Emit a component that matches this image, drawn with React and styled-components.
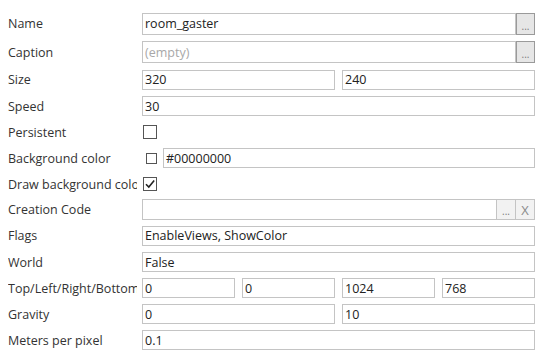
import React from "react";
import styled, { createGlobalStyle } from "styled-components";

const GlobalStyle = createGlobalStyle`
  html, body {
    margin: 0;
    padding: 0;
    background: #ffffff;
  }
  body {
    font-family: "Open Sans", "Noto Sans", "DejaVu Sans", sans-serif;
    font-size: 12.5px;
    color: #2b2b2b;
  }
`;

const Grid = styled.div`
  display: flex;
  flex-direction: column;
  width: 540px;
  padding: 9px 5px 0 8px;
  box-sizing: border-box;
`;

const Row = styled.div`
  display: flex;
  align-items: center;
  height: ${(p) => p.$h || 26}px;
`;

const Label = styled.div`
  width: 129px;
  margin-right: 5px;
  flex: none;
  white-space: nowrap;
  overflow: hidden;
  color: #333333;
  line-height: 17px;
`;

const Fields = styled.div`
  flex: 1;
  display: flex;
  align-items: center;
  gap: 7px;
  min-width: 0;
`;

const Box = styled.div`
  flex: 1;
  height: ${(p) => (p.$fill ? "auto" : "20px")};
  align-self: ${(p) => (p.$fill ? "stretch" : "auto")};
  box-sizing: border-box;
  border: 1px solid #c4c4c4;
  padding: 0 2px;
  display: flex;
  align-items: center;
  white-space: nowrap;
  overflow: hidden;
  color: ${(p) => (p.$muted ? "#a8a8a8" : "#222222")};
  min-width: 0;
`;

const Joined = styled.div`
  flex: 1;
  display: flex;
  align-items: stretch;
  height: ${(p) => p.$h || 22}px;
`;

const DotButton = styled.div`
  width: 19px;
  flex: none;
  box-sizing: border-box;
  border: 1px solid ${(p) => (p.$plain ? "#c4c4c4" : "#9a9a9a")};
  border-left: ${(p) => (p.$plain ? "none" : "1px solid #9a9a9a")};
  background: ${(p) => (p.$plain ? "#f2f2f2" : "#e6e6e6")};
  color: #7a7a7a;
  font-size: 10px;
  display: flex;
  align-items: flex-end;
  justify-content: center;
  padding-bottom: 3px;
  line-height: 10px;
`;

const XButton = styled.div`
  width: 19px;
  flex: none;
  box-sizing: border-box;
  border: 1px solid #c4c4c4;
  border-left: none;
  background: #f2f2f2;
  color: #8a8a8a;
  font-size: 13px;
  display: flex;
  align-items: center;
  justify-content: center;
`;

const Check = styled.div`
  width: ${(p) => p.$size || 14}px;
  height: ${(p) => p.$size || 14}px;
  flex: none;
  box-sizing: border-box;
  border: 1px solid #555555;
  background: #ffffff;
  margin-left: ${(p) => p.$ml || 1}px;
  margin-right: ${(p) => p.$mr || 0}px;
  display: flex;
  align-items: center;
  justify-content: center;
`;

function Tick() {
  return (
    <svg width="12" height="12" viewBox="0 0 12 12">
      <path d="M2 6.2 L4.8 9 L10.2 2.6" fill="none" stroke="#222" strokeWidth="1.6" />
    </svg>
  );
}

export default function App() {
  return (
    <>
      <GlobalStyle />
      <Grid>
        <Row $h={29}>
          <Label>Name</Label>
          <Fields>
            <Joined>
              <Box $fill>room_gaster</Box>
              <DotButton>...</DotButton>
            </Joined>
          </Fields>
        </Row>
        <Row $h={28}>
          <Label>Caption</Label>
          <Fields>
            <Joined>
              <Box $fill $muted>(empty)</Box>
              <DotButton>...</DotButton>
            </Joined>
          </Fields>
        </Row>
        <Row $h={27}>
          <Label>Size</Label>
          <Fields>
            <Box>320</Box>
            <Box>240</Box>
          </Fields>
        </Row>
        <Row>
          <Label>Speed</Label>
          <Fields>
            <Box>30</Box>
          </Fields>
        </Row>
        <Row>
          <Label>Persistent</Label>
          <Fields>
            <Check />
          </Fields>
        </Row>
        <Row>
          <Label>Background color</Label>
          <Fields>
            <Check $size={11} $ml={4} $mr={-1} />
            <Box>#00000000</Box>
          </Fields>
        </Row>
        <Row>
          <Label>Draw background color</Label>
          <Fields>
            <Check>
              <Tick />
            </Check>
          </Fields>
        </Row>
        <Row $h={25}>
          <Label>Creation Code</Label>
          <Fields>
            <Joined $h={21}>
              <Box $fill />
              <DotButton $plain>...</DotButton>
              <XButton>X</XButton>
            </Joined>
          </Fields>
        </Row>
        <Row $h={27}>
          <Label>Flags</Label>
          <Fields>
            <Box>EnableViews, ShowColor</Box>
          </Fields>
        </Row>
        <Row>
          <Label>World</Label>
          <Fields>
            <Box>False</Box>
          </Fields>
        </Row>
        <Row>
          <Label>Top/Left/Right/Bottom</Label>
          <Fields>
            <Box>0</Box>
            <Box>0</Box>
            <Box>1024</Box>
            <Box>768</Box>
          </Fields>
        </Row>
        <Row>
          <Label>Gravity</Label>
          <Fields>
            <Box>0</Box>
            <Box>10</Box>
          </Fields>
        </Row>
        <Row>
          <Label>Meters per pixel</Label>
          <Fields>
            <Box>0.1</Box>
          </Fields>
        </Row>
      </Grid>
    </>
  );
}
